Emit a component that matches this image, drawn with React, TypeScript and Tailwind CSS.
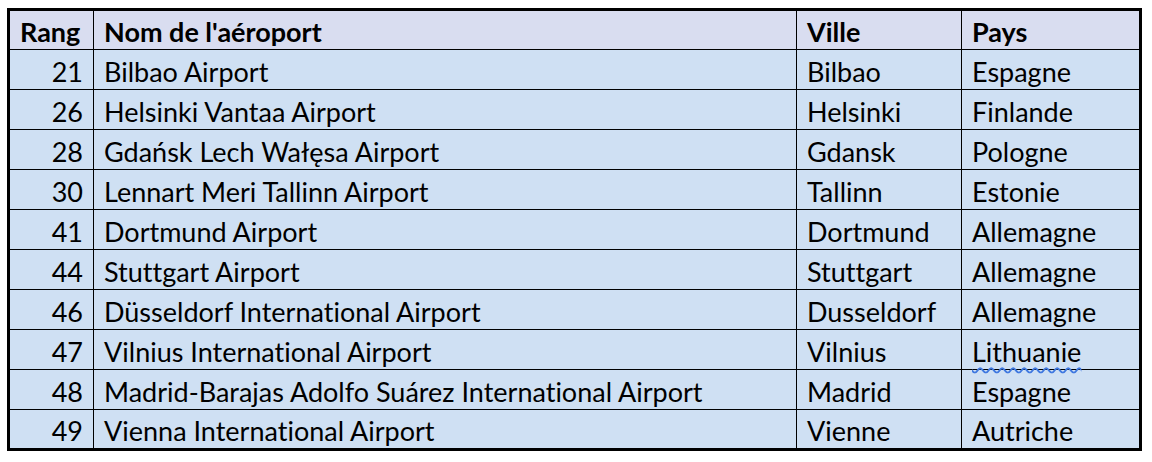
const ROWS = [
  { rang: 21, nom: 'Bilbao Airport', ville: 'Bilbao', pays: 'Espagne' },
  { rang: 26, nom: 'Helsinki Vantaa Airport', ville: 'Helsinki', pays: 'Finlande' },
  { rang: 28, nom: 'Gdańsk Lech Wałęsa Airport', ville: 'Gdansk', pays: 'Pologne' },
  { rang: 30, nom: 'Lennart Meri Tallinn Airport', ville: 'Tallinn', pays: 'Estonie' },
  { rang: 41, nom: 'Dortmund Airport', ville: 'Dortmund', pays: 'Allemagne' },
  { rang: 44, nom: 'Stuttgart Airport', ville: 'Stuttgart', pays: 'Allemagne' },
  { rang: 46, nom: 'Düsseldorf International Airport', ville: 'Dusseldorf', pays: 'Allemagne' },
  { rang: 47, nom: 'Vilnius International Airport', ville: 'Vilnius', pays: 'Lithuanie' },
  { rang: 48, nom: 'Madrid-Barajas Adolfo Suárez International Airport', ville: 'Madrid', pays: 'Espagne' },
  { rang: 49, nom: 'Vienna International Airport', ville: 'Vienne', pays: 'Autriche' },
];

const cell = 'border border-black h-10 px-[10px] pt-[3px] leading-none align-middle';

export default function App() {
  return (
    <div className="w-[1152px] h-[462px] bg-white pl-[7px] pt-[8px] text-[27px] text-black font-['Lato','Noto_Sans',sans-serif] [font-variant-ligatures:none]">
      <table className="border-collapse border-[3px] border-black table-fixed w-[1132px]">
        <colgroup>
          <col className="w-[85px]" />
          <col className="w-[703px]" />
          <col className="w-[165px]" />
          <col className="w-[179px]" />
        </colgroup>
        <thead>
          <tr className="bg-[#d9ddf0] font-bold">
            <th className={`${cell} text-left`}>Rang</th>
            <th className={`${cell} text-left`}>Nom de l'aéroport</th>
            <th className={`${cell} text-left`}>Ville</th>
            <th className={`${cell} text-left`}>Pays</th>
          </tr>
        </thead>
        <tbody>
          {ROWS.map(r => (
            <tr key={r.rang} className="bg-[#cfe0f3]">
              <td className={`${cell} text-right`}>{r.rang}</td>
              <td className={cell}>{r.nom}</td>
              <td className={cell}>{r.ville}</td>
              <td className={cell}>
                {r.pays === 'Lithuanie' ? (
                  <span className="underline decoration-wavy decoration-[#3f78e0] decoration-[1.5px] underline-offset-[5px]">{r.pays}</span>
                ) : r.pays}
              </td>
            </tr>
          ))}
        </tbody>
      </table>
    </div>
  );
}
